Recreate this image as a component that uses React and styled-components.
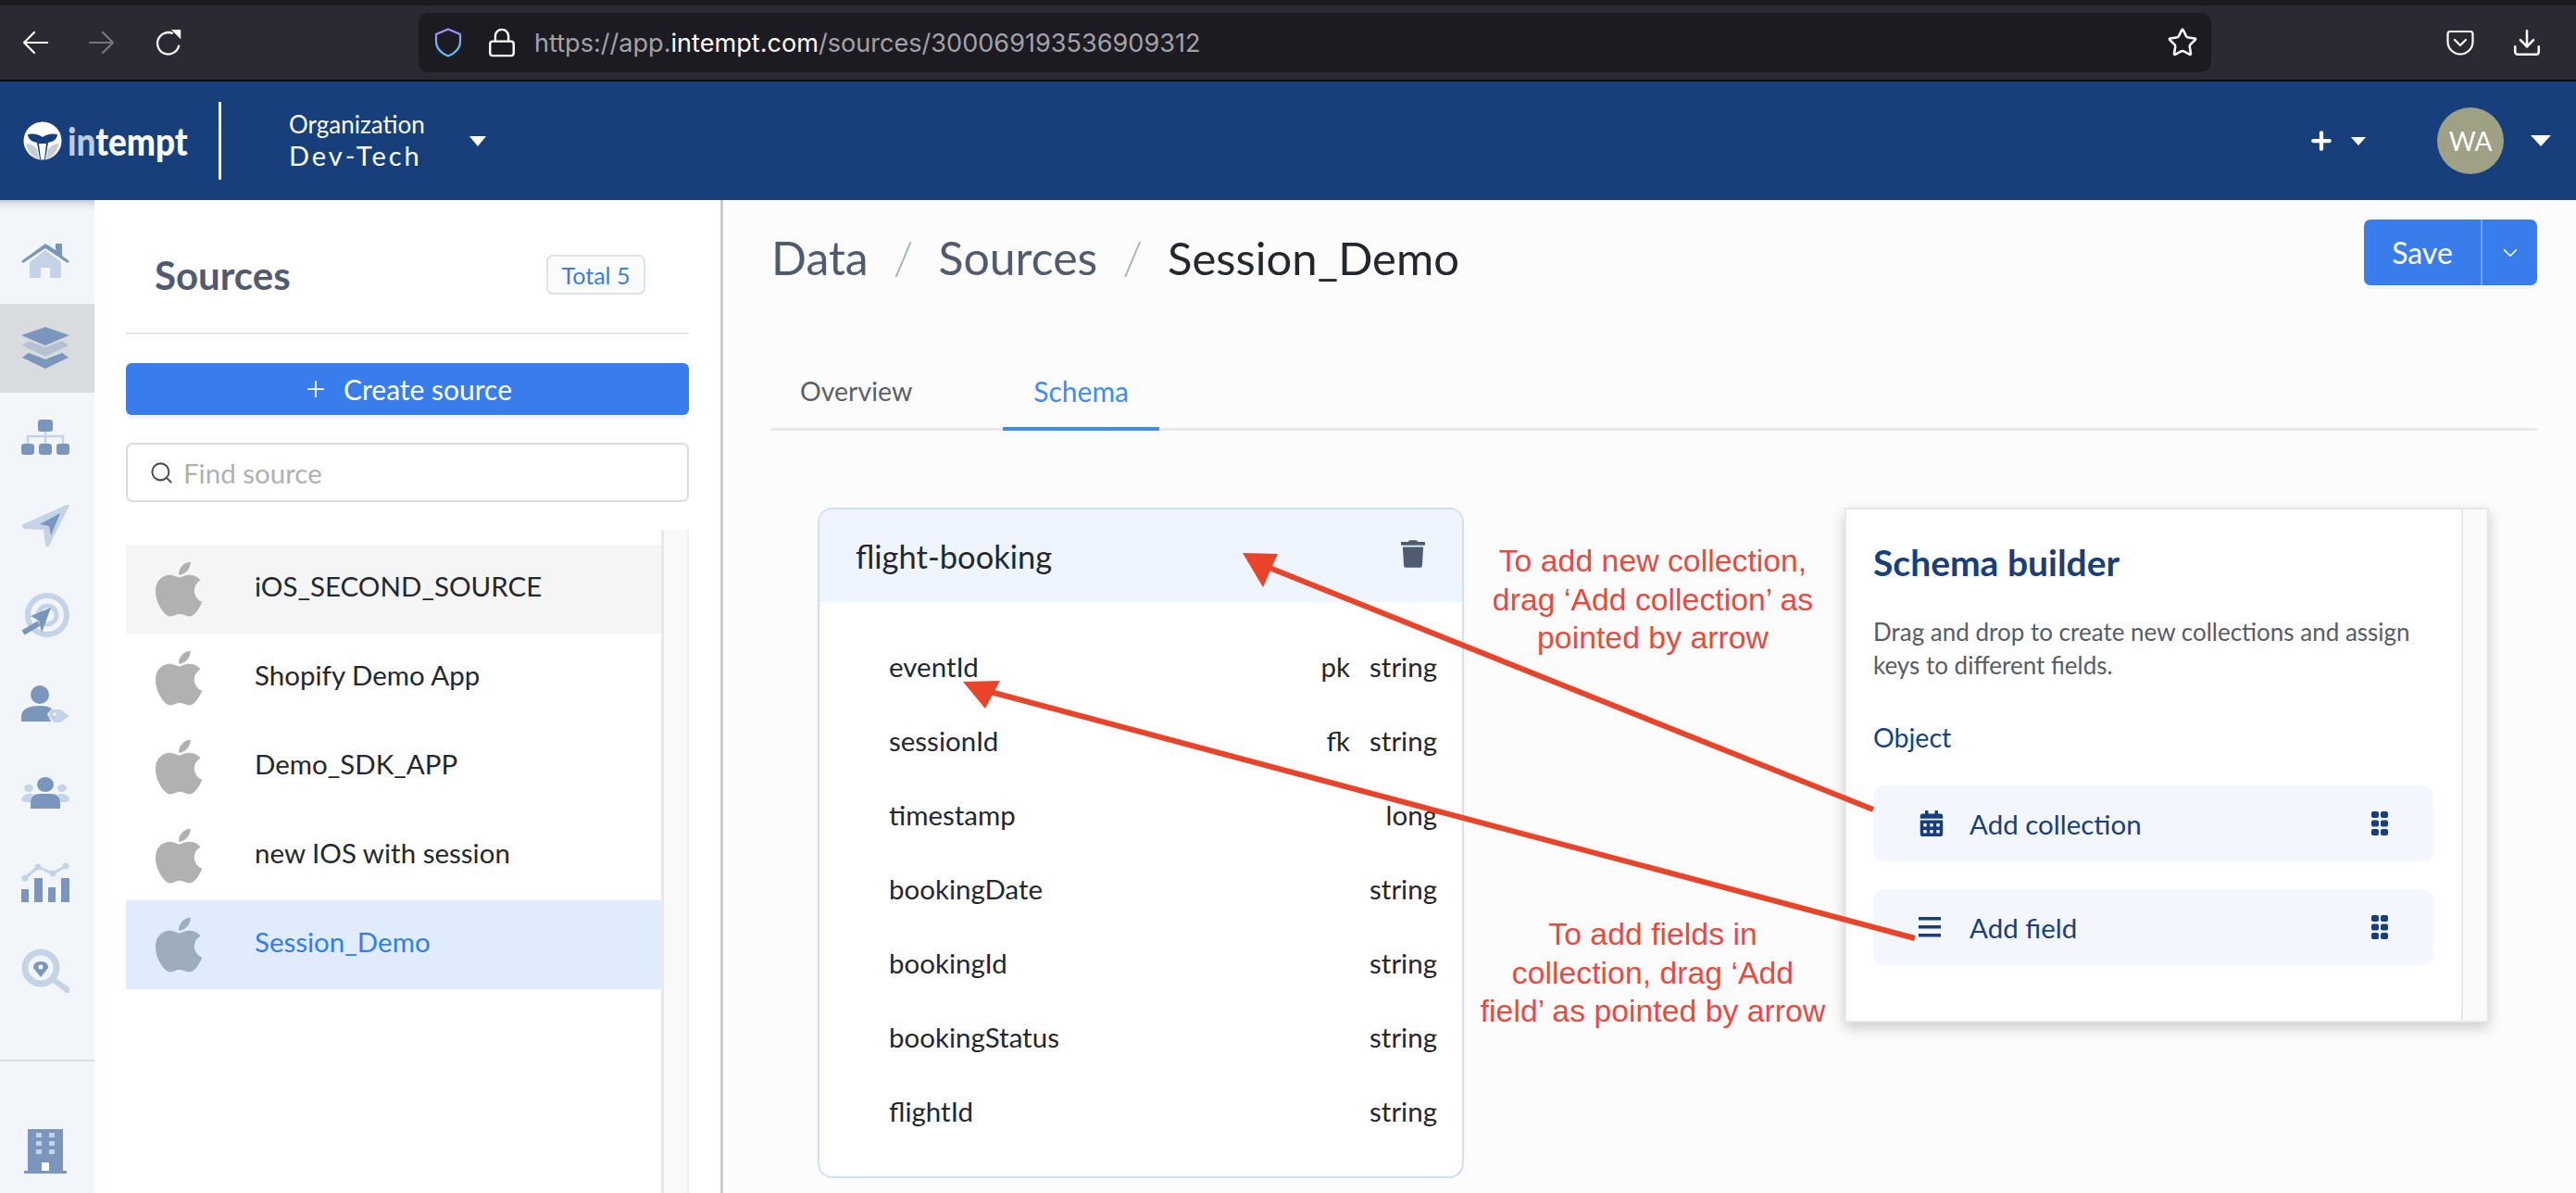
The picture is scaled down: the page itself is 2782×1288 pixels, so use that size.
import React from "react";
import styled, {createGlobalStyle} from "styled-components";
import {ChevronDown, Download, Lock, Plus, Search, Star} from "lucide-react";
import {FaApple, FaCalendarAlt, FaTrash} from "react-icons/fa";

const DARK = '#7a96bd'
const LIGHT = '#c4d3e5'
const NAVY = '#173f7c'
const BLUE = '#387deb'

const GlobalStyle = createGlobalStyle`
  html, body {
    margin: 0;
    padding: 0;
    background: #fcfcfd;
  }

  * {
    box-sizing: border-box;
  }
`

const sources = [
    {name: 'iOS_SECOND_SOURCE', hover: true},
    {name: 'Shopify Demo App'},
    {name: 'Demo_SDK_APP'},
    {name: 'new IOS with session'},
    {name: 'Session_Demo', active: true},
]

const fields = [
    {name: 'eventId', key: 'pk', type: 'string'},
    {name: 'sessionId', key: 'fk', type: 'string'},
    {name: 'timestamp', type: 'long'},
    {name: 'bookingDate', type: 'string'},
    {name: 'bookingId', type: 'string'},
    {name: 'bookingStatus', type: 'string'},
    {name: 'flightId', type: 'string'},
]

const HomeIcon = () => (
    <NavSvg viewBox="0 0 52 48">
        <path d="M9 27 L26 14 L43 27 V44 H31 V33 H21 V44 H9Z" fill={LIGHT}/>
        <path d="M0 26 L26 7 L37 14 V7 H44 V20 L52 26 L50 28 L26 12 L2 28Z" fill={DARK}/>
    </NavSvg>
)

const LayersIcon = () => (
    <NavSvg viewBox="0 0 52 48">
        <path d="M1 21 L8 16 L26 23 L44 16 L51 21 L26 33Z" fill="#b3c1d0"/>
        <path d="M26 1 L52 10 L26 21 L0 10Z" fill={DARK}/>
        <path d="M1 34 L8 29 L26 36 L44 29 L51 34 L26 46Z" fill={DARK}/>
    </NavSvg>
)

const NetworkIcon = () => (
    <NavSvg viewBox="0 0 52 48">
        <path d="M26 16 V32 M7 32 V23 H45 V32" stroke={LIGHT} strokeWidth="2.5" fill="none"/>
        <rect x="18" y="5" width="16" height="13" rx="3" fill={DARK}/>
        <rect x="0" y="31" width="14" height="12" rx="3" fill={DARK}/>
        <rect x="19" y="31" width="14" height="12" rx="3" fill={DARK}/>
        <rect x="38" y="31" width="14" height="12" rx="3" fill={DARK}/>
    </NavSvg>
)

const SendIcon = () => (
    <NavSvg viewBox="0 0 52 48">
        <path d="M2 22 L49 1 Q53 0 51 4 L30 45 Q27 49 26 44 L24 28 L3 27 Q-1 24 2 22Z" fill={LIGHT}/>
        <path d="M42 10 L20 22 L30 24 L32 34Z" fill={DARK}/>
    </NavSvg>
)

const TargetIcon = () => (
    <NavSvg viewBox="0 0 52 48">
        <circle cx="28" cy="24" r="21" stroke={LIGHT} strokeWidth="6" fill="none"/>
        <circle cx="28" cy="24" r="10" stroke={LIGHT} strokeWidth="5" fill="none"/>
        <path d="M2 43 L19 33" stroke={DARK} strokeWidth="6"/>
        <path d="M32 16 L10 25 L19 30 L22 43Z" fill={DARK}/>
    </NavSvg>
)

const UserTagIcon = () => (
    <NavSvg viewBox="0 0 52 48">
        <circle cx="20" cy="14" r="10" fill={DARK}/>
        <path d="M0 43 V38 Q0 26 20 26 Q29 26 33 29 L28 35 L32 43Z" fill={DARK}/>
        <path d="M31 30 H42 L52 37 L42 44 H36 L30 38Z" fill={LIGHT}/>
        <circle cx="36" cy="35" r="1.800" fill="#f2f6fb"/>
    </NavSvg>
)

const UsersIcon = () => (
    <NavSvg viewBox="0 0 52 48">
        <ellipse cx="8" cy="19" rx="5" ry="4" fill={LIGHT}/>
        <ellipse cx="44" cy="19" rx="5" ry="4" fill={LIGHT}/>
        <path d="M0 32 Q1 25 10 25 H13 Q10 28 10 34 H3Z M52 32 Q51 25 42 25 H39 Q42 28 42 34 H49Z" fill={LIGHT}/>
        <ellipse cx="26" cy="15" rx="9" ry="8" fill={DARK}/>
        <path d="M10 41 V34 Q10 25 20 25 H32 Q42 25 42 34 V41Z" fill={DARK}/>
    </NavSvg>
)

const ChartIcon = () => (
    <NavSvg viewBox="0 0 52 48">
        <path d="M4 20 L18 8 L34 15 L48 7" stroke={LIGHT} strokeWidth="3" fill="none"/>
        <circle cx="4" cy="20" r="3.5" fill={LIGHT}/>
        <circle cx="18" cy="8" r="3.5" fill={LIGHT}/>
        <circle cx="34" cy="15" r="3.5" fill={LIGHT}/>
        <circle cx="48" cy="7" r="3.5" fill={LIGHT}/>
        <rect x="0" y="32" width="8" height="14" fill={DARK}/>
        <rect x="14" y="20" width="9" height="26" fill={DARK}/>
        <rect x="29" y="30" width="8" height="16" fill={DARK}/>
        <rect x="43" y="20" width="9" height="26" fill={DARK}/>
    </NavSvg>
)

const FindIcon = () => (
    <NavSvg viewBox="0 0 52 48">
        <circle cx="21" cy="21" r="17" stroke={LIGHT} strokeWidth="7" fill="none"/>
        <path d="M35 34 L50 45" stroke={LIGHT} strokeWidth="6" strokeLinecap="round"/>
        <path d="M21 31 L13 21 Q13 14 21 14 Q29 14 29 21Z" fill={DARK}/>
        <circle cx="21" cy="20" r="2.5" fill="#fff"/>
    </NavSvg>
)

const BuildingIcon = () => (
    <NavSvg viewBox="0 0 52 48">
        <path d="M7 0 H45 V45 H7Z" fill={DARK}/>
        <rect x="3" y="45" width="46" height="3" fill={DARK}/>
        <path d="M16 4 H22 V9 H16Z M30 4 H36 V9 H30Z M16 13 H22 V18 H16Z M30 13 H36 V18 H30Z M16 22 H22 V27 H16Z M30 22 H36 V27 H30Z" fill={LIGHT}/>
        <rect x="22" y="36" width="8" height="9" fill="#fff"/>
    </NavSvg>
)

const navIcons = [HomeIcon, LayersIcon, NetworkIcon, SendIcon, TargetIcon, UserTagIcon, UsersIcon, ChartIcon, FindIcon]

const GripIcon = () => (
    <svg width="18" height="26" viewBox="0 0 18 26" fill={NAVY}>
        <rect x="0" y="0" width="8" height="7" rx="2"/>
        <rect x="10" y="0" width="8" height="7" rx="2"/>
        <rect x="0" y="9.5" width="8" height="7" rx="2"/>
        <rect x="10" y="9.5" width="8" height="7" rx="2"/>
        <rect x="0" y="19" width="8" height="7" rx="2"/>
        <rect x="10" y="19" width="8" height="7" rx="2"/>
    </svg>
)

const BarsIcon = () => (
    <svg width="24" height="22" viewBox="0 0 24 22" fill={NAVY}>
        <rect x="0" y="0" width="24" height="3.5"/>
        <rect x="0" y="9" width="24" height="3.5"/>
        <rect x="0" y="18" width="24" height="3.5"/>
    </svg>
)

const NavArrow = ({color, flip}) => (
    <svg width="28" height="26" viewBox="0 0 28 26" fill="none" stroke={color} strokeWidth="2.2"
         strokeLinecap="round" strokeLinejoin="round" transform={flip ? 'scale(-1 1)' : undefined}>
        <path d="M2 13 H27 M13 2 L2 13 L13 24"/>
    </svg>
)

const App = () => {
    return (
        <Page>
            <GlobalStyle/>
            <BrowserBar>
                <BrowserNav>
                    <NavArrow color="#fbfbfe"/>
                    <NavArrow color="#77767c" flip/>
                    <svg width="30" height="32" viewBox="0 0 32 34" fill="none">
                        <path d="M27 20 A12.5 12.5 0 1 1 20 6.5" stroke="#fbfbfe" strokeWidth="2.4"/>
                        <path d="M18 2 H29 V13Z" fill="#fbfbfe"/>
                    </svg>
                </BrowserNav>
                <UrlBox>
                    <svg width="30" height="32" viewBox="0 0 30 32" fill="none">
                        <defs>
                            <linearGradient id="shield" x1="0" y1="0" x2="0" y2="1">
                                <stop offset="0" stopColor="#a78bfa"/>
                                <stop offset="1" stopColor="#4fc3f7"/>
                            </linearGradient>
                        </defs>
                        <path d="M15 1.5 L28 7 V15 Q28 25 15 30.5 Q2 25 2 15 V7Z" stroke="url(#shield)" strokeWidth="2.2"/>
                    </svg>
                    <Lock size={34} strokeWidth={1.7} color="#fbfbfe"/>
                    <UrlText>https://app.<b>intempt.com</b>/sources/300069193536909312</UrlText>
                    <Star size={34} strokeWidth={1.8} color="#fbfbfe"/>
                </UrlBox>
                <BrowserTools>
                    <svg width="30" height="28" viewBox="0 0 30 28" fill="none" stroke="#fbfbfe" strokeWidth="2.2">
                        <path d="M4 2 H26 Q28.500 2 28.500 5 V13 A13.500 13.500 0 0 1 1.500 13 V5 Q1.500 2 4 2Z"/>
                        <path d="M9 11 L15 17 L21 11" strokeLinecap="round" strokeLinejoin="round"/>
                    </svg>
                    <Download size={34} strokeWidth={1.8} color="#fbfbfe"/>
                </BrowserTools>
            </BrowserBar>

            <Header>
                <Logo>
                    <svg width="42" height="42" viewBox="0 0 42 42">
                        <ellipse cx="21" cy="21" rx="20.500" ry="20.500" fill="#fff"/>
                        <path d="M5 14 Q14 12 21 17 Q28 12 37 14 Q37 21 27 23 L24 41 H18 L15 23 Q5 21 5 14Z" fill={NAVY}/>
                        <path d="M3 24 Q10 24 15 30 L17 41 Q6 37 3 24Z M39 24 Q32 24 27 30 L25 41 Q36 37 39 24Z" fill="#c9cdd4"/>
                        <path d="M17 24 H25 L23 41 H19Z" fill="#fff"/>
                    </svg>
                    <LogoText><span>in</span>tempt</LogoText>
                </Logo>
                <LogoRule/>
                <Org>
                    <OrgLabel>Organization</OrgLabel>
                    <OrgName>Dev-Tech</OrgName>
                </Org>
                <Caret $w={19} $h={11} $ml={58}/>
                <HeaderRight>
                    <Plus size={30} strokeWidth={3.4} color="#fff"/>
                    <Caret $w={16} $h={9} $ml={17}/>
                    <Avatar>WA</Avatar>
                    <Caret $w={22} $h={12} $ml={29}/>
                </HeaderRight>
            </Header>

            <Body>
                <Sidebar>
                    <NavList>
                        {navIcons.map((Icon, i) => (
                            <NavItem key={i} $active={i === 1}><Icon/></NavItem>
                        ))}
                    </NavList>
                    <SideFoot><BuildingIcon/></SideFoot>
                </Sidebar>

                <Panel>
                    <TitleRow>
                        <PanelTitle>Sources</PanelTitle>
                        <Badge>Total 5</Badge>
                    </TitleRow>
                    <CreateButton><Plus size={28} strokeWidth={1.5}/>Create source</CreateButton>
                    <SearchBox>
                        <Search size={27} strokeWidth={1.8} color="#4a4f57"/>
                        <span>Find source</span>
                    </SearchBox>
                    <ListWrap>
                        <SourceList>
                            {sources.map(s => (
                                <SourceRow key={s.name} $hover={s.hover} $active={s.active}>
                                    <AppleIcon $active={s.active}/>
                                    <SourceName>{s.name}</SourceName>
                                </SourceRow>
                            ))}
                        </SourceList>
                        <ScrollTrack/>
                    </ListWrap>
                </Panel>

                <Main>
                    <TopRow>
                        <Crumbs>
                            <Crumb>Data</Crumb>
                            <CrumbSep>/</CrumbSep>
                            <Crumb>Sources</Crumb>
                            <CrumbSep>/</CrumbSep>
                            <Crumb $current>Session_Demo</Crumb>
                        </Crumbs>
                        <SaveGroup>
                            <SaveLabel>Save</SaveLabel>
                            <SaveArrow><ChevronDown size={26} strokeWidth={1.5}/></SaveArrow>
                        </SaveGroup>
                    </TopRow>
                    <Tabs>
                        <Tab>Overview</Tab>
                        <Tab $active>Schema</Tab>
                    </Tabs>
                    <Content>
                        <Card>
                            <CardHead>
                                <CardTitle>flight-booking</CardTitle>
                                <TrashIcon/>
                            </CardHead>
                            <FieldList>
                                {fields.map(f => (
                                    <FieldRow key={f.name}>
                                        <span>{f.name}</span>
                                        <FieldMeta>
                                            {f.key && <span>{f.key}</span>}
                                            <span>{f.type}</span>
                                        </FieldMeta>
                                    </FieldRow>
                                ))}
                            </FieldList>
                        </Card>
                        <Builder>
                            <BuilderBody>
                                <BuilderTitle>Schema builder</BuilderTitle>
                                <BuilderText>Drag and drop to create new collections and assign keys to different fields.</BuilderText>
                                <ObjectLabel>Object</ObjectLabel>
                                <DragItem>
                                    <DragIcon><FaCalendarAlt size={28} color={NAVY}/></DragIcon>
                                    <DragName>Add collection</DragName>
                                    <GripIcon/>
                                </DragItem>
                                <DragItem>
                                    <DragIcon><BarsIcon/></DragIcon>
                                    <DragName>Add field</DragName>
                                    <GripIcon/>
                                </DragItem>
                            </BuilderBody>
                            <BuilderScroll/>
                        </Builder>
                    </Content>
                </Main>
            </Body>

            <Note $top={585}>To add new collection,<br/>drag ‘Add collection’ as<br/>pointed by arrow</Note>
            <Note $top={988}>To add fields in<br/>collection, drag ‘Add<br/>field’ as pointed by arrow</Note>
            <Arrows viewBox="0 0 2782 1288">
                <path d="M2023 874 L1366 611" stroke="#e9442a" strokeWidth="6"/>
                <path d="M1342 597 L1380 598 L1364 634Z" fill="#e9442a"/>
                <path d="M2068 1013 L1066 746" stroke="#e9442a" strokeWidth="6"/>
                <path d="M1040 736 L1080 735 L1064 765Z" fill="#e9442a"/>
            </Arrows>
        </Page>
    )
}

const Page = styled.div`
  position: relative;
  width: 2782px;
  height: 1288px;
  overflow: hidden;
  display: flex;
  flex-direction: column;
  font-family: "Lato", "Open Sans", sans-serif;
  background: #fcfcfd;
`

const BrowserBar = styled.div`
  height: 88px;
  flex-shrink: 0;
  display: flex;
  align-items: center;
  background: #2b2a33;
  border-top: 6px solid #1c1b22;
  border-bottom: 2px solid #0c0c0f;
  padding: 0 36px 0 24px;
`

const BrowserNav = styled.div`
  width: 428px;
  display: flex;
  align-items: center;
  gap: 44px;
`

const UrlBox = styled.div`
  width: 1936px;
  height: 64px;
  display: flex;
  align-items: center;
  padding: 0 14px 0 17px;
  background: #1c1b22;
  border-radius: 10px;

  > svg:nth-child(2) {
    margin-left: 26px;
  }
`

const UrlText = styled.div`
  flex: 1;
  margin-left: 18px;
  font-family: "Inter", sans-serif;
  font-size: 27.1px;
  color: #a3a2a8;
  white-space: nowrap;

  b {
    font-weight: 400;
    color: #fbfbfe;
  }
`

const BrowserTools = styled.div`
  flex: 1;
  display: flex;
  justify-content: flex-end;
  align-items: center;
  gap: 40px;
`

const Header = styled.div`
  height: 128px;
  flex-shrink: 0;
  display: flex;
  align-items: center;
  background: ${NAVY};
  color: #fff;
  padding: 0 25px;
`

const Logo = styled.div`
  display: flex;
  align-items: center;
  gap: 6px;
  width: 211px;
`

const LogoText = styled.div`
  font-size: 41px;
  font-weight: 900;
  color: #fff;
  transform: scaleX(.9);
  transform-origin: left;

  span {
    color: #bccbdd;
  }
`

const LogoRule = styled.div`
  width: 3px;
  height: 84px;
  background: #e8edf3;
`

const Org = styled.div`
  margin-left: 73px;
  width: 137px;
  white-space: nowrap;
`

const OrgLabel = styled.div`
  font-size: 26px;
  line-height: 34px;
  margin-top: -2px;
`

const OrgName = styled.div`
  font-size: 29px;
  line-height: 34px;
  letter-spacing: 3px;
`

const Caret = styled.div`
  width: 0;
  height: 0;
  margin-left: ${p => p.$ml}px;
  border-left: ${p => p.$w / 2}px solid transparent;
  border-right: ${p => p.$w / 2}px solid transparent;
  border-top: ${p => p.$h}px solid #fff;
`

const HeaderRight = styled.div`
  margin-left: auto;
  margin-right: 2px;
  display: flex;
  align-items: center;
`

const Avatar = styled.div`
  width: 72px;
  height: 72px;
  margin-left: 77px;
  border-radius: 50%;
  background: #9ea184;
  color: #fff;
  font-size: 28px;
  display: flex;
  align-items: center;
  justify-content: center;
`

const Body = styled.div`
  flex: 1;
  display: flex;
  min-height: 0;
`

const Sidebar = styled.div`
  width: 102px;
  flex-shrink: 0;
  display: flex;
  flex-direction: column;
  background: #f2f6fb;
  box-shadow: inset 0 12px 10px -10px rgba(0, 0, 0, .25);
`

const NavList = styled.div`
  padding: 16px 0 48px;
  border-bottom: 2px solid #d8dde3;
`

const NavItem = styled.div`
  height: 96px;
  display: flex;
  align-items: center;
  justify-content: center;
  background: ${p => p.$active ? '#d8dcdf' : 'transparent'};
`

const NavSvg = styled.svg`
  width: 52px;
  height: 48px;
  margin-left: -4px;
`

const SideFoot = styled.div`
  flex: 1;
  display: flex;
  align-items: center;
  justify-content: center;
  padding-top: 52px;
`

const Panel = styled.div`
  width: 679px;
  flex-shrink: 0;
  display: flex;
  flex-direction: column;
  padding: 0 34px;
  background: #fff;
  border-right: 3px solid #cfcfcf;
`

const TitleRow = styled.div`
  height: 145px;
  flex-shrink: 0;
  display: flex;
  align-items: center;
  justify-content: space-between;
  padding: 18px 47px 0 31px;
  border-bottom: 2px solid #e5e5e5;
`

const PanelTitle = styled.div`
  font-size: 42px;
  font-weight: 700;
  color: #4f5b70;
`

const Badge = styled.div`
  width: 107px;
  height: 43px;
  display: flex;
  align-items: center;
  justify-content: center;
  border: 2px solid #dfe1e4;
  border-radius: 7px;
  background: #fafbfc;
  color: ${BLUE};
  font-size: 25px;
`

const CreateButton = styled.div`
  height: 56px;
  flex-shrink: 0;
  margin-top: 31px;
  display: flex;
  align-items: center;
  justify-content: center;
  gap: 16px;
  border-radius: 6px;
  background: ${BLUE};
  box-shadow: 0 4px 0 #f3f3f3;
  color: #fff;
  font-size: 30px;
`

const SearchBox = styled.div`
  height: 64px;
  flex-shrink: 0;
  margin-top: 30px;
  display: flex;
  align-items: center;
  gap: 10px;
  padding: 0 23px;
  border: 2px solid #dcdcdc;
  border-radius: 7px;
  color: #b0b0b0;
  font-size: 29.5px;
`

const ListWrap = styled.div`
  flex: 1;
  margin-top: 30px;
  display: flex;
  min-height: 0;
`

const SourceList = styled.div`
  flex: 1;
  padding-top: 16px;
`

const SourceRow = styled.div`
  height: 96px;
  display: flex;
  align-items: center;
  padding-left: 32px;
  background: ${p => p.$active ? '#e0ecfd' : p.$hover ? '#f5f5f5' : 'transparent'};
  color: ${p => p.$active ? '#2f7cf6' : '#24272c'};
  font-size: 29.5px;
`

const SourceName = styled.span`
  margin-bottom: 8px;
`

const AppleIcon = styled(FaApple)`
  width: 50px;
  height: 60px;
  margin-right: 57px;
  transform: scale(1.14, 1.12);
  color: ${p => p.$active ? '#9eadbc' : '#b1b1b1'};
`

const ScrollTrack = styled.div`
  width: 30px;
  background: #f9f9f9;
  border-left: 3px solid #e8e8e8;
  border-right: 2px solid #efefef;
`

const Main = styled.div`
  flex: 1;
  min-width: 0;
  padding: 21px 42px 0 51px;
`

const TopRow = styled.div`
  display: flex;
  justify-content: space-between;
  align-items: flex-start;
  height: 154px;
`

const Crumbs = styled.div`
  display: flex;
  align-items: center;
  height: 82px;
  padding-left: 1px;
  font-size: 50px;
`

const Crumb = styled.span`
  color: ${p => p.$current ? '#24272c' : '#4f5b70'};
  font-size: ${p => p.$current ? 49 : 50}px;
`

const CrumbSep = styled.span`
  margin: 0 27px;
  color: #a9afba;
  font-weight: 300;
`

const SaveGroup = styled.div`
  width: 187px;
  height: 71px;
  display: flex;
  border-radius: 7px;
  background: ${BLUE};
  box-shadow: 0 4px 0 #f3f3f3;
  color: #fff;
`

const SaveLabel = styled.div`
  width: 128px;
  display: flex;
  align-items: center;
  justify-content: center;
  border-right: 2px solid #6aa2f2;
  font-size: 32px;
`

const SaveArrow = styled.div`
  flex: 1;
  display: flex;
  align-items: center;
  justify-content: center;
`

const Tabs = styled.div`
  height: 74px;
  display: flex;
  border-bottom: 3px solid #e9e9e9;
`

const Tab = styled.div`
  height: 74px;
  padding: 0 ${p => p.$active ? 33 : 32}px 8px;
  margin-right: ${p => p.$active ? 0 : 66}px;
  display: flex;
  align-items: center;
  color: ${p => p.$active ? '#3f8cf3' : '#5c5f66'};
  border-bottom: 4px solid ${p => p.$active ? '#3f8cf3' : 'transparent'};
  font-size: ${p => p.$active ? 30 : 28.5}px;
`

const Content = styled.div`
  display: flex;
  justify-content: space-between;
  align-items: flex-start;
  padding: 83px 52px 0 51px;
`

const Card = styled.div`
  width: 698px;
  height: 724px;
  background: #fff;
  border: 2px solid #cfe0f6;
  border-radius: 16px;
  overflow: hidden;
`

const CardHead = styled.div`
  height: 100px;
  display: flex;
  align-items: center;
  justify-content: space-between;
  padding: 0 40px 0 39px;
  background: #eef5ff;
`

const CardTitle = styled.div`
  font-size: 34.5px;
  color: #24272c;
`

const TrashIcon = styled(FaTrash)`
  width: 26px;
  height: 30px;
  margin-top: -4px;
  color: #4f5b70;
`

const FieldList = styled.div`
  padding: 29px 27px 0 75px;
`

const FieldRow = styled.div`
  height: 80px;
  display: flex;
  align-items: center;
  justify-content: space-between;
  font-size: 29.5px;
  color: #24272c;
`

const FieldMeta = styled.div`
  display: flex;
  gap: 21px;
`

const Builder = styled.div`
  width: 696px;
  height: 556px;
  display: flex;
  background: #fff;
  border: 2px solid #e7e7e7;
  box-shadow: 0 6px 14px rgba(0, 0, 0, .2);
`

const BuilderBody = styled.div`
  flex: 1;
  padding: 34px 30px 0 29px;
`

const BuilderTitle = styled.div`
  font-size: 39px;
  font-weight: 700;
  line-height: 46px;
  color: ${NAVY};
`

const BuilderText = styled.div`
  margin-top: 34px;
  font-size: 26px;
  line-height: 36px;
  color: #575c66;
`

const ObjectLabel = styled.div`
  margin-top: 40px;
  font-size: 28.5px;
  line-height: 40px;
  color: ${NAVY};
`

const DragItem = styled.div`
  height: 82px;
  margin-top: 32px;
  display: flex;
  align-items: center;
  padding: 0 49px 0 49px;
  border-radius: 12px;
  background: #f3f6fc;

  & + & {
    margin-top: 30px;
  }
`

const DragIcon = styled.div`
  width: 55px;
  display: flex;
  align-items: center;
`

const DragName = styled.div`
  flex: 1;
  font-size: 29.5px;
  color: ${NAVY};
`

const BuilderScroll = styled.div`
  width: 28px;
  background: #fafafa;
  border-left: 2px solid #e8e8e8;
`

const Note = styled.div`
  position: absolute;
  left: 1535px;
  top: ${p => p.$top}px;
  width: 500px;
  text-align: center;
  font-family: "Liberation Sans", Arial, sans-serif;
  font-size: 33.8px;
  line-height: 41.5px;
  color: #ea4a3e;
`

const Arrows = styled.svg`
  position: absolute;
  left: 0;
  top: 0;
  width: 2782px;
  height: 1288px;
  pointer-events: none;
`

export default App
